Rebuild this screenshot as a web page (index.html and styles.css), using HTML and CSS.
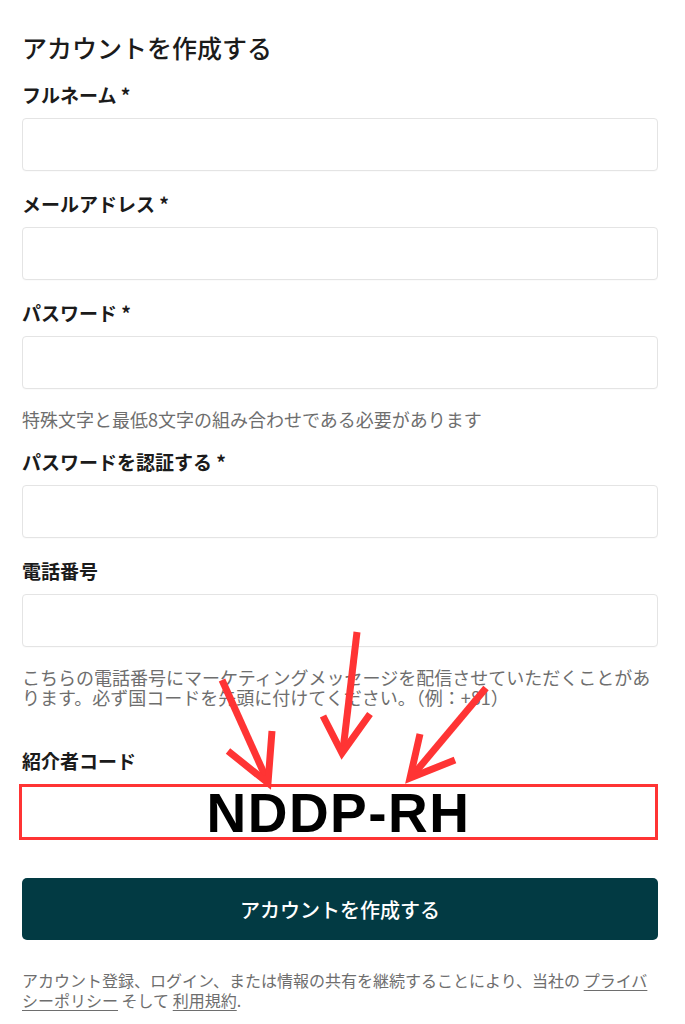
FILE: index.html
```html
<!DOCTYPE html>
<html lang="ja">
<head>
  <meta charset="UTF-8" />
  <title>アカウントを作成する</title>
  <meta name="viewport" content="width=device-width, initial-scale=1.0" />
  <link rel="stylesheet" href="styles.css">
</head>
<body>

  <form class="signup-form" onsubmit="return false;">
    <h1 class="signup-title">アカウントを作成する</h1>

    <div class="signup-field">
      <label class="signup-label" for="fullname">フルネーム *</label>
      <input class="signup-input" id="fullname" type="text" />
    </div>

    <div class="signup-field">
      <label class="signup-label" for="email">メールアドレス *</label>
      <input class="signup-input" id="email" type="email" />
    </div>

    <div class="signup-field">
      <label class="signup-label" for="password">パスワード *</label>
      <input class="signup-input" id="password" type="password" />
      <p class="signup-hint">特殊文字と最低8文字の組み合わせである必要があります</p>
    </div>

    <div class="signup-field">
      <label class="signup-label" for="password2">パスワードを認証する *</label>
      <input class="signup-input" id="password2" type="password" />
    </div>

    <div class="signup-field">
      <label class="signup-label" for="phone">電話番号</label>
      <input class="signup-input" id="phone" type="tel" />
      <p class="signup-hint">こちらの電話番号にマーケティングメッセージを配信させていただくことがあります。必ず国コードを先頭に付けてください。（例：+81）</p>
    </div>

    <div class="signup-field referral">
      <label class="signup-label" for="referral">紹介者コード</label>
      <div class="signup-code" id="referral">NDDP-RH</div>
    </div>

    <button class="signup-btn" type="submit">アカウントを作成する</button>

    <p class="signup-terms">
      アカウント登録、ログイン、または情報の共有を継続することにより、当社の <a href="#">プライバシーポリシー</a> そして <a href="#">利用規約</a>.
    </p>
  </form>

  <!-- annotation arrows drawn over the form -->
  <svg class="signup-arrows" width="685" height="1024" viewBox="0 0 685 1024">
    <g fill="none" stroke="#ff3434" stroke-width="7" stroke-linejoin="miter" stroke-miterlimit="10">
      <line x1="222" y1="680" x2="267" y2="780" />
      <polyline points="228,751 268,783 272,731" />

      <line x1="357" y1="632" x2="343" y2="750" />
      <polyline points="323,716 342,753 370,714" />

      <line x1="486" y1="688" x2="413" y2="775" />
      <polyline points="420,734 410,778 455,760" />
    </g>
  </svg>

</body>
</html>
```

FILE: styles.css
```css
:root {
  --signup-fg: #1b1b1b;
  --signup-muted: #6e6e6e;
  --signup-border: #e4e4e4;
  --signup-accent: #023a43;
  --signup-red: #ff3434;
}

body {
  margin: 0;
  background: #fff;
  color: var(--signup-fg);
  font-family: "Noto Sans CJK JP", "Noto Sans", sans-serif;
}

.signup-form {
  display: flex;
  flex-direction: column;
  padding: 31px 27px 20px 22px;
}

.signup-title {
  margin: 0 0 20px;
  font-size: 25px;
  line-height: 32px;
  font-weight: 500;
}

.signup-field {
  display: flex;
  flex-direction: column;
  margin-bottom: 21px;
}

.signup-field.referral {
  margin-top: 21px;
  margin-bottom: 38px;
}

.signup-label {
  font-size: 19px;
  line-height: 24px;
  font-weight: 700;
  margin-bottom: 11px;
}

.signup-input {
  box-sizing: border-box;
  height: 53px;
  border: 1px solid var(--signup-border);
  border-radius: 4px;
  background: #fff;
  padding: 0 14px;
  font: inherit;
  font-size: 18px;
  box-shadow: 0 1px 1px rgba(0,0,0,0.02);
}

.signup-hint {
  margin: 20px 0 0;
  font-size: 18px;
  line-height: 20px;
  color: var(--signup-muted);
}

.signup-code {
  box-sizing: border-box;
  height: 56px;
  margin-left: -3px;
  border: 3px solid var(--signup-red);
  display: flex;
  align-items: center;
  justify-content: center;
  font-family: "Liberation Sans", Arial, sans-serif;
  font-size: 55px;
  font-weight: 700;
  letter-spacing: 1.5px;
  line-height: 1;
  color: #000;
  padding-top: 2px;
}

.signup-btn {
  height: 62px;
  border: none;
  border-radius: 5px;
  background: var(--signup-accent);
  color: #fff;
  font: inherit;
  font-size: 20px;
  font-weight: 500;
  cursor: pointer;
}

.signup-terms {
  margin: 30px 0 0;
  font-size: 16px;
  line-height: 20px;
  color: var(--signup-muted);
}

.signup-terms a {
  color: var(--signup-muted);
  text-decoration: underline 1px #6e6e6e;
  text-underline-offset: 3px;
}

.signup-arrows {
  position: absolute;
  top: 0;
  left: 0;
  pointer-events: none;
}
```
